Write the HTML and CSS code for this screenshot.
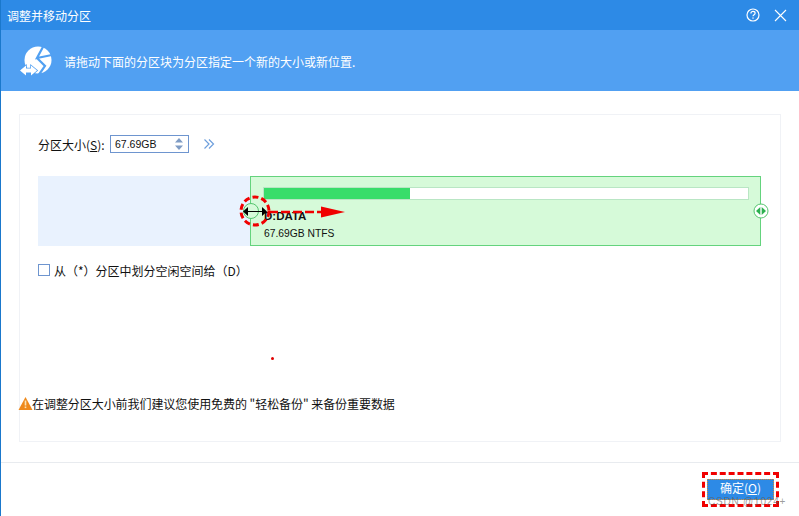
FILE: index.html
```html
<!DOCTYPE html>
<html lang="zh-CN">
<head>
<meta charset="utf-8">
<title>调整并移动分区</title>
<link rel="stylesheet" href="styles.css">
</head>
<body>
<div class="window">
  <header class="titlebar">
    <span class="title">调整并移动分区</span>
    <div class="controls">
      <svg class="ctl" width="16" height="16" viewBox="0 0 16 16"><circle cx="8" cy="8" r="6" fill="none" stroke="#fff" stroke-width="1.2"/><path d="M5.900 6.400c0-1.300 1-2 2.100-2s2.100.7 2.100 1.800c0 1.500-2.100 1.500-2.100 3.100" fill="none" stroke="#fff" stroke-width="1.200"/><rect x="7.400" y="10.400" width="1.200" height="1.300" fill="#fff"/></svg>
      <svg class="ctl" width="13" height="13" viewBox="0 0 13 13"><path d="M1 1l11 11M12 1L1 12" fill="none" stroke="#fff" stroke-width="1.100"/></svg>
    </div>
  </header>
  <section class="banner">
    <svg class="banner-icon" width="32" height="32" viewBox="0 0 32 32">
      <circle cx="18" cy="15" r="13.500" fill="#fff"/>
      <path d="M24 0L17 13l15-3M17 13l8 8-7 10" fill="none" stroke="#51a0f2" stroke-width="2.200"/>
      <path d="M0 25.500l6-5v3h5v-3l6 5-6 5v-3H6v3z" fill="#fff" stroke="#51a0f2" stroke-width="1.500" paint-order="stroke"/>
    </svg>
    <span class="banner-text">请拖动下面的分区块为分区指定一个新的大小或新位置.</span>
  </section>
  <main class="content">
    <div class="panel">
      <div class="size-row">
        <label class="size-label">分区大小(<u>S</u>):</label>
        <div class="spin">
          <span>67.69GB</span>
          <svg width="10" height="14" viewBox="0 0 10 14"><path d="M5 1l4 4.500H1zM5 13L1 8.500h8z" fill="#7f9cc4"/></svg>
        </div>
        <svg class="chev" width="12" height="12" viewBox="0 0 12 12"><path d="M1.500 1.500L6 6l-4.500 4.500M6 1.500L10.500 6 6 10.500" fill="none" stroke="#6e9fdc" stroke-width="1.200"/></svg>
      </div>
      <div class="map">
        <div class="free"></div>
        <div class="part">
          <div class="usage"><div class="usage-fill"></div></div>
          <div class="part-name">D:DATA</div>
          <div class="part-info">67.69GB NTFS</div>
          <span class="handle handle-l"></span>
          <svg class="handle handle-r" width="16" height="16" viewBox="0 0 16 16"><circle cx="8" cy="8" r="7" fill="#fff" stroke="#55c56e"/><path d="M7.300 4v8L3 8zM8.700 4v8L13 8z" fill="#2db04f"/></svg>
        </div>
        <svg class="annot" width="108" height="36" viewBox="0 0 108 36">
          <circle cx="16" cy="18" r="14" fill="none" stroke="#f00000" stroke-width="3" stroke-dasharray="6 3"/>
          <path d="M30 19h52" stroke="#f00000" stroke-width="2.500" stroke-dasharray="9 3"/>
          <path d="M82 13.500L106 19 82 24.500z" fill="#f00000"/>
          <path d="M6 18.500h20" stroke="#000" stroke-width="1"/>
          <path d="M4 18.500l5-4.500v9zM28 18.500l-5-4.500v9z" fill="#000"/>
        </svg>
      </div>
      <label class="check-row"><span class="check"></span><span>从（*）分区中划分空闲空间给（D）</span></label>
      <div class="spacer"><i class="dot"></i></div>
      <div class="warn">
        <svg width="15" height="15" viewBox="0 0 15 15"><path d="M7.500 1L14.500 14H.5z" fill="#ef8a1d"/><rect x="6.700" y="4.500" width="1.600" height="5" fill="#fbe3b5"/><rect x="6.700" y="10.500" width="1.600" height="1.600" fill="#fbe3b5"/></svg>
        <span>在调整分区大小前我们建议您使用免费的 "轻松备份" 来备份重要数据</span>
      </div>
    </div>
  </main>
  <footer class="footer">
    <div class="ok-wrap">
      <button class="ok" type="button">确定(<u>O</u>)</button>
      <span class="mark">CSDN @1024+</span>
    </div>
  </footer>
</div>
</body>
</html>
```
FILE: styles.css
```css
html, body { margin: 0; padding: 0; background: #fff; }
body { width: 799px; height: 516px; overflow: hidden; font-family: "Noto Sans CJK SC", "Liberation Sans", sans-serif; font-size: 12px; color: #111; }
.window { width: 799px; height: 516px; box-sizing: border-box; border-left: 1px solid #1a78cc; display: flex; flex-direction: column; }
.titlebar { height: 30px; flex: none; background: #2d8ae6; color: #fff; display: flex; align-items: center; justify-content: space-between; padding: 0 12px 0 6px; }
.title { font-size: 12px; }
.controls { display: flex; align-items: center; gap: 13px; }
.ctl { display: block; }
.banner { height: 61px; flex: none; background: #51a0f2; color: #fff; display: flex; align-items: center; padding-left: 19px; gap: 12px; }
.banner-icon { display: block; }
.banner-text { font-size: 12px; padding-top: 1px; }
.content { flex: none; height: 372px; padding: 23px 18px 0 18px; box-sizing: border-box; border-bottom: 1px solid #e8ebef; }
.panel { height: 328px; box-sizing: border-box; border: 1px solid #f0f2f6; padding: 19px 18px 0 18px; display: flex; flex-direction: column; }
.size-row { display: flex; align-items: center; height: 20px; }
.size-label { width: 72px; }
.spin { width: 79px; height: 18px; box-sizing: border-box; border: 1px solid #6e95cf; display: flex; align-items: center; justify-content: space-between; padding: 0 4px 0 4px; font-family: "Liberation Sans", sans-serif; font-size: 10.500px; }
.chev { margin-left: 14px; }
.map { position: relative; display: flex; height: 70px; margin-top: 22px; width: 723px; }
.free { width: 212px; background: #e9f2fe; }
.part { position: relative; flex: 1; box-sizing: border-box; border: 1px solid #64d37d; background: #d6fad9; padding: 10px 0 0 12px; font-family: "Liberation Sans", sans-serif; font-size: 10.300px; }
.usage { width: 486px; height: 13px; box-sizing: border-box; border: 1px solid #b9e6c4; background: #fff; }
.usage-fill { width: 146px; height: 100%; background: #38dd6a; }
.part-name { font-weight: bold; font-size: 11.500px; margin-top: 10px; padding-left: 1px; line-height: 13px; }
.part-info { margin-top: 4px; padding-left: 1px; line-height: 13px; }
.handle { position: absolute; top: 26px; }
.handle-l { left: -8px; width: 14px; height: 14px; border: 1px solid #55c56e; border-radius: 50%; background: #d6fad9; }
.handle-r { right: -9px; display: block; }
.annot { position: absolute; left: 201px; top: 17px; display: block; }
.check-row { display: flex; align-items: center; gap: 4px; margin-top: 16px; height: 16px; }
.check { width: 10px; height: 10px; border: 1px solid #6e95cf; background: #fff; }
.spacer { flex: 1; position: relative; }
.dot { position: absolute; left: 233px; top: 79px; width: 3px; height: 3px; background: #e00000; border-radius: 50%; }
.warn { display: flex; align-items: center; margin: 0 0 30px -20px; height: 16px; font-size: 12px; letter-spacing: -.06px; }
.warn svg { display: block; margin-right: -1px; }
.footer { flex: 1; display: flex; justify-content: flex-end; align-items: flex-start; padding: 9px 20px 0 0; }
.ok-wrap { position: relative; box-sizing: border-box; width: 77px; height: 35px; border: 3px dashed #f00000; padding: 4px 2px; }
.ok { width: 100%; height: 100%; display: block; padding: 0 0 3px; border: 1px dotted #e08a2a; background: #2d8ae6; color: #fff; font-family: "Noto Sans CJK SC", sans-serif; font-size: 12px; line-height: 14px; }
.mark { position: absolute; left: 3px; bottom: -3px; font-family: "Liberation Sans", sans-serif; font-size: 10px; letter-spacing: .8px; color: rgba(90, 90, 90, .6); white-space: nowrap; line-height: 10px; }
```
